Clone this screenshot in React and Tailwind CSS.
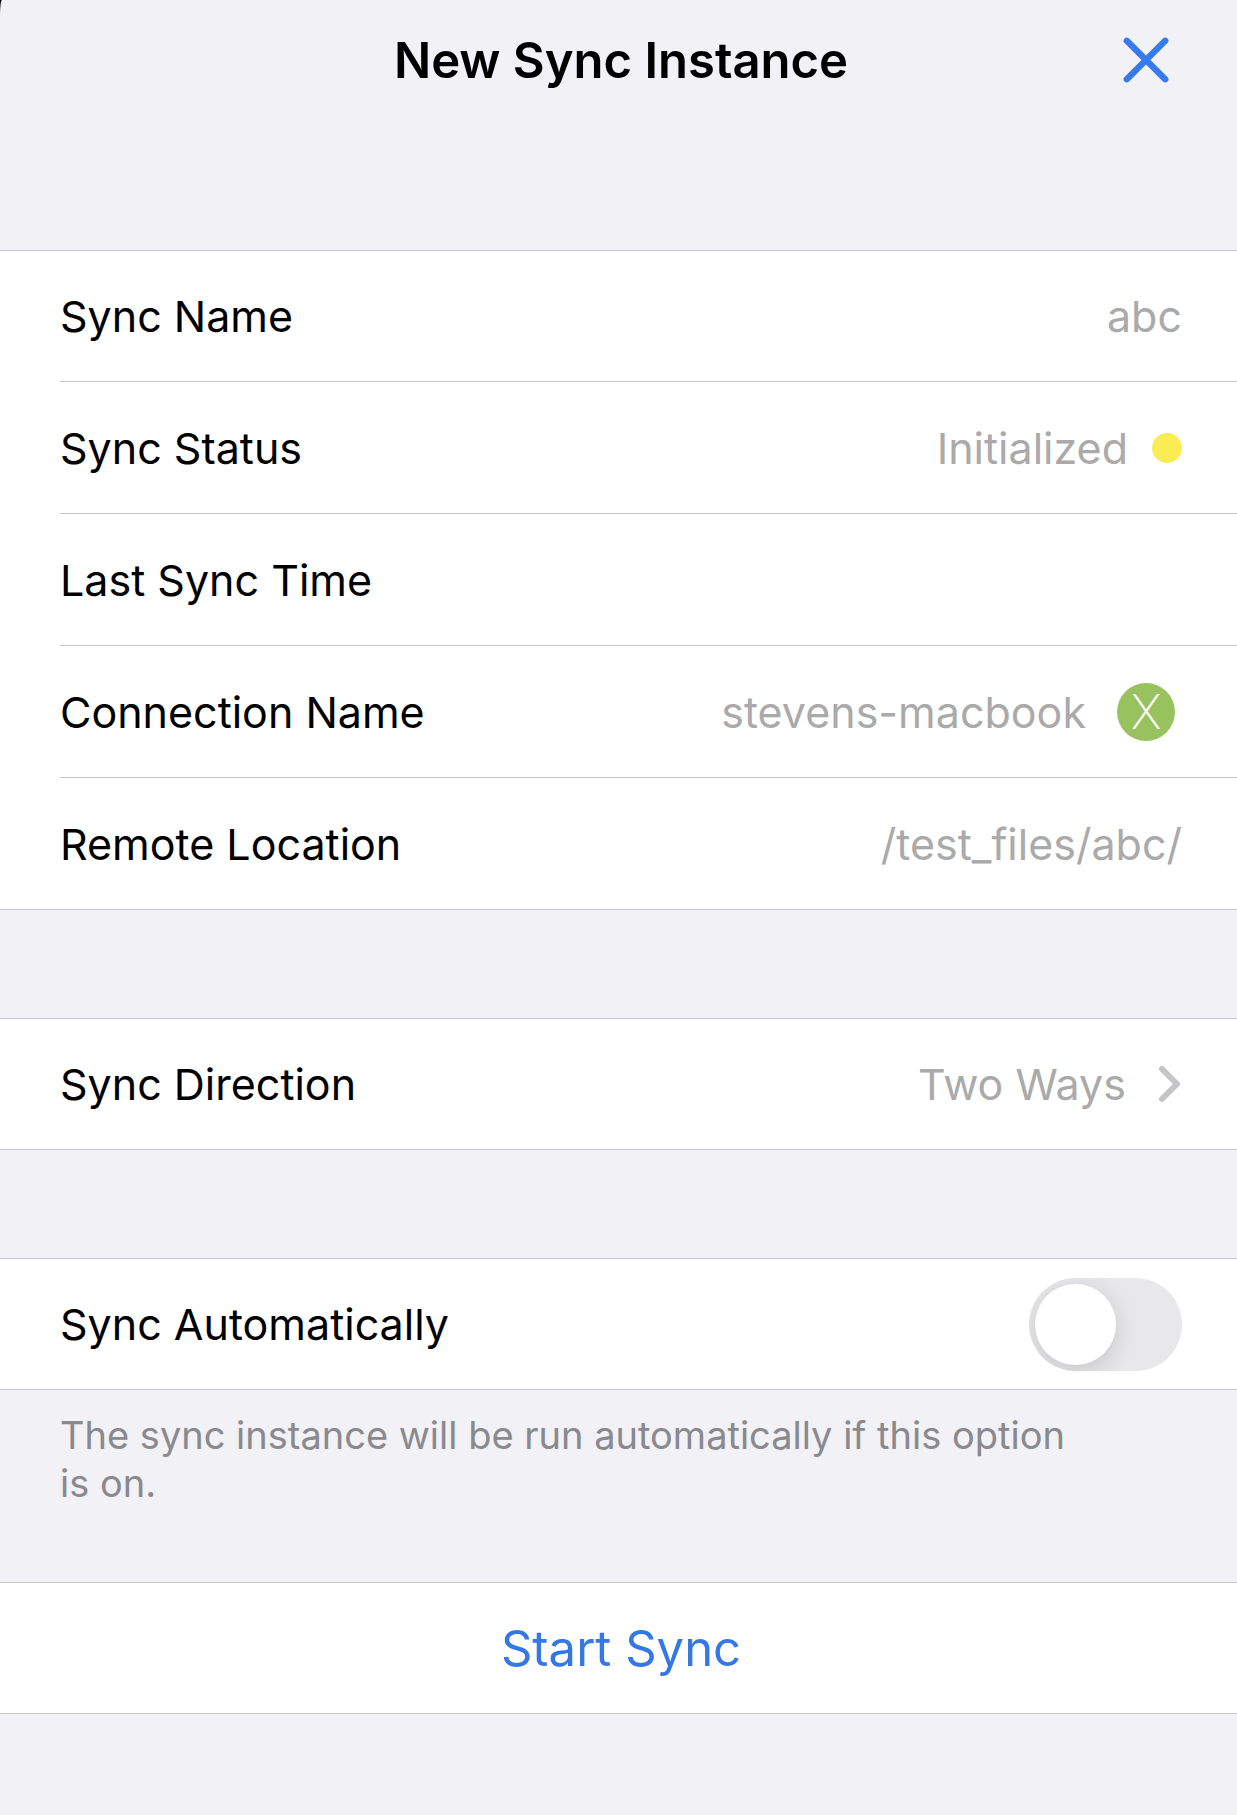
import { useState } from 'react';

function Group({ children }) {
  return <section className="border-y border-[#c6c6c8] bg-white">{children}</section>;
}

function Row({ label, divider, children }) {
  return (
    <div className="pl-[60px]">
      <div
        className={
          divider
            ? 'flex h-[132px] items-center justify-between border-t border-[#c6c6c8] pr-[55px]'
            : 'flex h-[130px] items-center justify-between pr-[55px]'
        }
      >
        <span className="text-black">{label}</span>
        <span className="flex items-center gap-6 text-[#aaaaaa]">{children}</span>
      </div>
    </div>
  );
}

export default function App() {
  const [auto, setAuto] = useState(false);

  return (
    <div className="min-h-screen bg-black">
      <main className="min-h-screen rounded-tl-[2px_15px] bg-[#f1f1f6] font-['Inter',sans-serif] text-[43px] leading-[56px]">
        <header className="grid h-[120px] grid-cols-[72px_1fr_72px] items-center pr-[55px] pl-[60px]">
          <h1 className="col-start-2 pt-0.5 text-center text-[49px] leading-[58px] font-semibold text-black">
            New Sync Instance
          </h1>
          <button type="button" aria-label="Close" className="flex size-[72px] items-center justify-center">
            <svg viewBox="0 0 46 46" className="size-[46px]" fill="none" stroke="#377af0" strokeWidth="6.4" strokeLinecap="round">
              <path d="M3.8 3.8 42.2 42.2M42.2 3.8 3.8 42.2" />
            </svg>
          </button>
        </header>

        <div className="mt-[130px] flex flex-col gap-[108px]">
          <Group>
            <Row label="Sync Name">abc</Row>
            <Row label="Sync Status" divider>
              Initialized
              <span className="size-[30px] rounded-full bg-[#f9ec54]" />
            </Row>
            <Row label="Last Sync Time" divider />
            <Row label="Connection Name" divider>
              stevens-macbook
              <span className="flex w-[72px] justify-center">
                <span className="flex size-[58px] items-center justify-center rounded-full bg-[#97c25e] text-[48px] font-extralight text-white">
                  X
                </span>
              </span>
            </Row>
            <Row label="Remote Location" divider>/test_files/abc/</Row>
          </Group>

          <Group>
            <button type="button" className="block w-full text-left">
              <Row label="Sync Direction">
                Two Ways
                <svg viewBox="0 0 32 36" className="h-9 w-8" fill="none" stroke="#c5c5c7" strokeWidth="6" strokeLinecap="round" strokeLinejoin="round">
                  <path d="M12 3 27 18 12 33" />
                </svg>
              </Row>
            </button>
          </Group>

          <Group>
            <Row label={<label htmlFor="auto">Sync Automatically</label>}>
              <input
                id="auto"
                type="checkbox"
                role="switch"
                checked={auto}
                onChange={(e) => setAuto(e.target.checked)}
                className="h-[93px] w-[153px] appearance-none overflow-hidden rounded-full bg-[#e8e8ea] p-1.5 before:block before:size-[81px] before:rounded-full before:bg-white before:shadow-[0_6px_24px_rgba(0,0,0,0.15)] checked:bg-[#34c759] checked:before:ml-[60px]"
              />
            </Row>
          </Group>
        </div>

        <p className="pt-[21px] pr-[140px] pb-[75px] pl-[60px] text-[38px] leading-[48px] text-[#89898e]">
          The sync instance will be run automatically if this option is on.
        </p>

        <Group>
          <button type="button" className="h-[130px] w-full pt-0.5 pr-[55px] pl-[60px] text-[49px] leading-[58px] text-[#3478e8]">
            Start Sync
          </button>
        </Group>
      </main>
    </div>
  );
}
